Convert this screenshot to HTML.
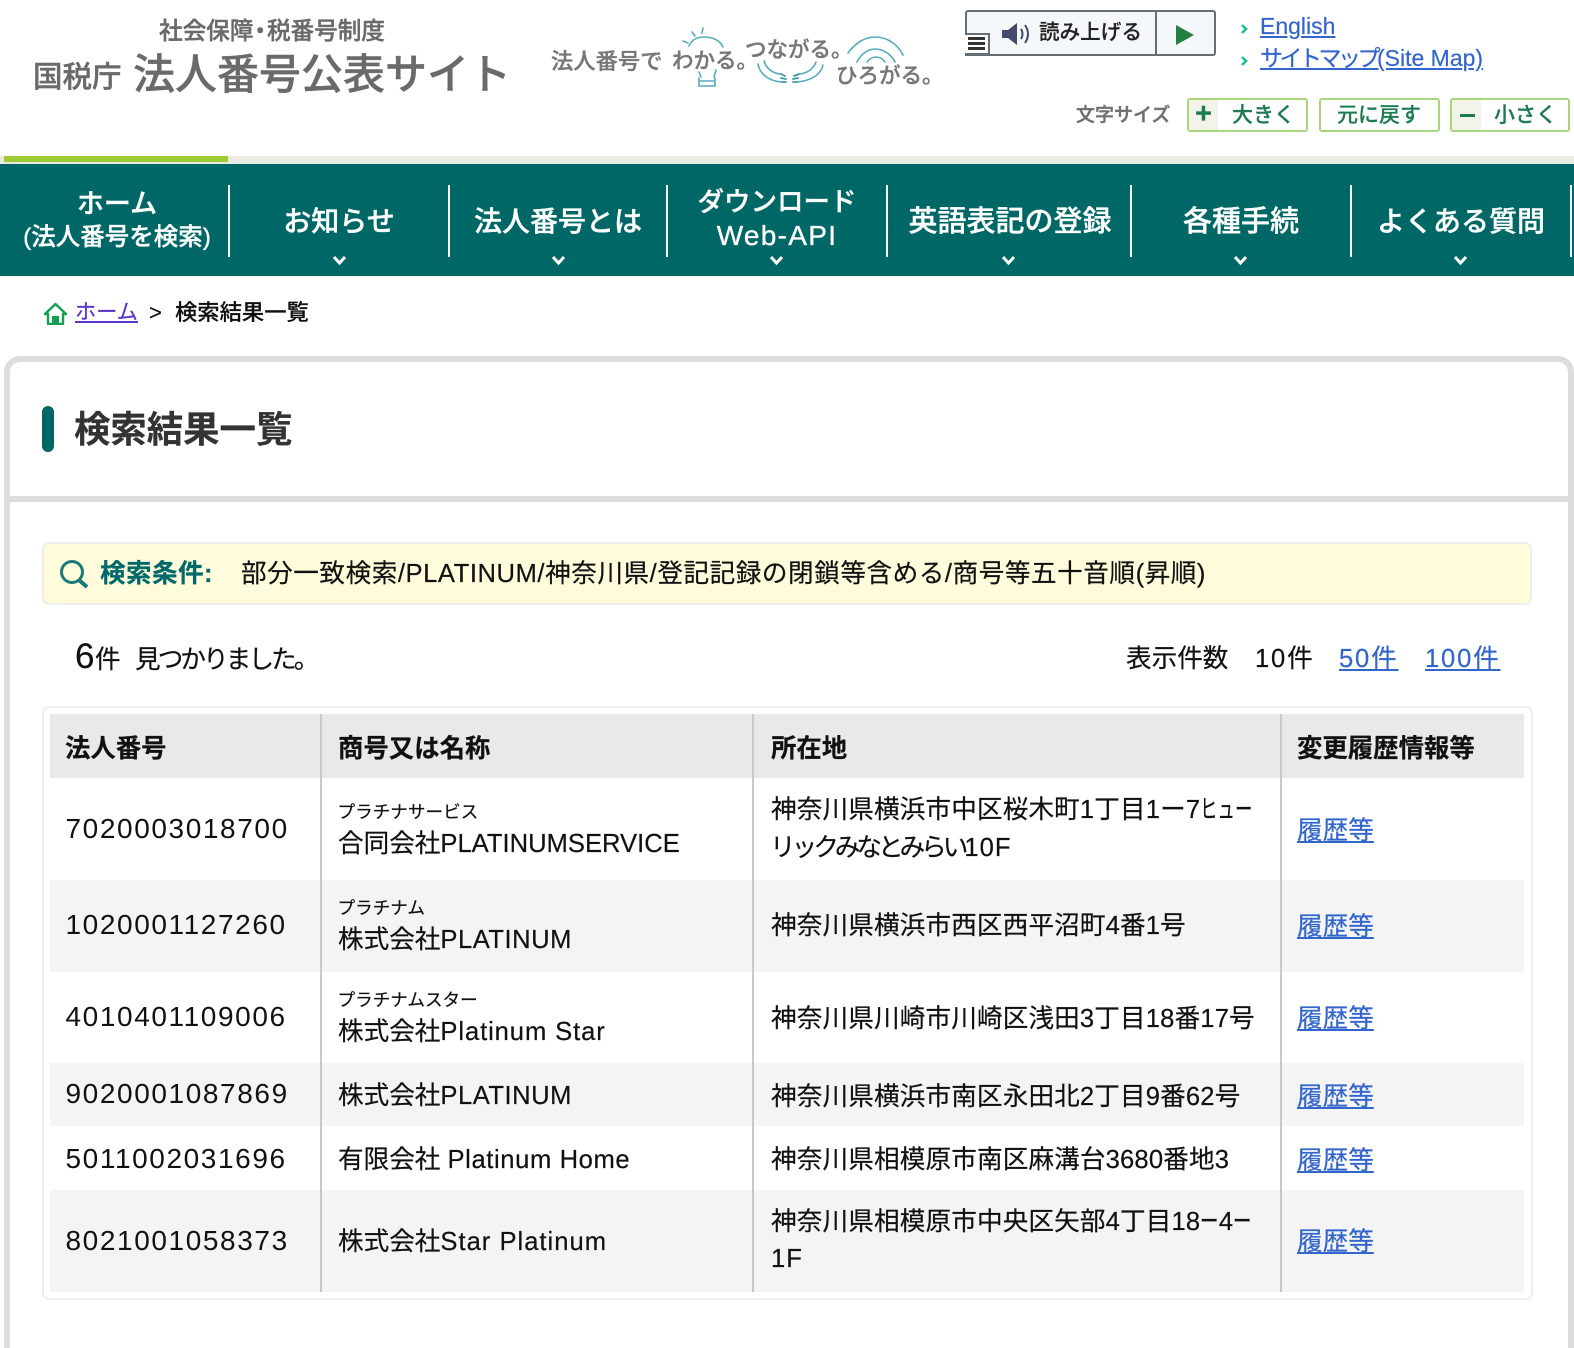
<!DOCTYPE html>
<html lang="ja"><head><meta charset="utf-8"><title>検索結果一覧</title>
<style>
html,body{margin:0;padding:0;background:#fff;width:1574px;height:1348px;overflow:hidden}
#p{position:relative;width:1574px;height:1348px;overflow:hidden;font-family:"Liberation Sans","Noto Sans CJK JP",sans-serif;color:#111}
.a{position:absolute;box-sizing:border-box}
.t{position:absolute;white-space:nowrap;line-height:30px;font-size:25.6px;margin-top:1px;-webkit-text-stroke:.2px}
.c{transform:translateX(-50%);text-align:center}
.n{color:#fff;font-size:28px;font-weight:500;-webkit-text-stroke:.35px}
a{color:#3366cc;text-decoration:underline}
.g{color:#6a6a6a;font-weight:500;-webkit-text-stroke:.4px}
.tg{color:#777;font-weight:500;-webkit-text-stroke:.35px}
.num{font-size:28px;letter-spacing:1.6px;-webkit-text-stroke:0}
.kana{font-size:17.6px}
.h{font-weight:700;font-size:25.4px}
.ad{letter-spacing:.15px}
.sq{display:inline-block;transform-origin:left center;line-height:30px;vertical-align:top}
.fs{color:#1e7a50;font-size:21px;font-weight:500}
.btn{position:absolute;top:98px;height:34px;border:2px solid #a9d67c;border-radius:3px;background:#fff;box-sizing:border-box}
.cell{position:absolute;left:0;top:0;width:29px;height:30px;background:#f3f3ea}
.sep{position:absolute;top:185px;width:2px;height:72px;background:#fff}
.rb{position:absolute;left:50px;width:1474px}
.vl{position:absolute;top:714px;height:578px;width:2px;background:#c9c9c9}
</style></head><body><div id="p">

<!-- logo -->
<div class="t g" style="left:159px;top:16px;font-size:23.7px;letter-spacing:-.1px;">社会保障<span style="margin:0 -5px">・</span>税番号制度</div>
<div class="t g" style="left:33px;top:62px;font-size:29.5px;">国税庁</div>
<div class="t g" style="left:133px;top:59px;font-size:42px;">法人番号公表サイト</div>

<!-- tagline -->
<div class="t tg" style="left:551px;top:46px;font-size:22.3px">法人番号で</div>
<div class="t tg" style="left:672px;top:45px;font-size:21.5px">わかる。</div>
<div class="t tg" style="left:745px;top:34px;font-size:21.5px">つながる。</div>
<div class="t tg" style="left:836px;top:60px;font-size:21.5px">ひろがる。</div>
<svg class="a" style="left:0;top:0" width="1000" height="100" fill="none" stroke="#55aabf" stroke-width="1.6" stroke-linecap="round">
<path d="M689 46C692 39 698 37 704 37C712 37 720 40 723 47"/>
<path d="M683 41L688 43M692 32L695 36M703 28L702 33"/>
<path d="M699 78V86H715V78M700 81H714"/>
<path d="M699 72L701 77M716 70L714 77"/>
<path d="M758 64C760 75 770 81 781 82M764 61C766 68 772 73 780 74"/>
<path d="M823 65C821 75 810 81 797 82M816 62C814 68 808 73 800 74"/>
<path d="M781 74L785 76M781 78L786 79M782 82L786 82M799 74L794 76M798 78L793 79M797 82L793 82" stroke-width="1.8" stroke="#3c96ad"/>
<path d="M848 53C856 42 866 37 875 37C886 37 897 43 903 55"/>
<path d="M857 62C861 54 868 49 875 49C883 49 891 54 895 62"/>
<path d="M867 62C870 58 873 57 876 57C880 57 883 59 885 62"/>
</svg>

<!-- read aloud -->
<div class="a" style="left:965px;top:10px;width:251px;height:46px;border:2px solid #656d75;border-radius:3px;background:#f5f8fb"></div>
<div class="a" style="left:1155px;top:11px;width:2px;height:44px;background:#656d75"></div>
<div class="a" style="left:965px;top:33px;width:25px;height:23px;background:#fff;border-top:2px solid #656d75;border-right:2px solid #656d75;border-bottom:3px solid #656d75"></div>
<div class="a" style="left:968px;top:37px;width:17px;height:3px;background:#333"></div>
<div class="a" style="left:968px;top:42px;width:17px;height:3px;background:#333"></div>
<div class="a" style="left:968px;top:47px;width:17px;height:3px;background:#333"></div>
<svg class="a" style="left:1000px;top:20px" width="34" height="28" fill="none">
<path d="M2 10H8L17 3V25L8 18H2Z" fill="#444a6e"/>
<path d="M21 9C23 12 23 16 21 19M25 5C29 11 29 17 25 23" stroke="#444a6e" stroke-width="2"/>
</svg>
<div class="t" style="left:1039px;top:17px;font-size:20.6px;font-weight:500;color:#222">読み上げる</div>
<svg class="a" style="left:1176px;top:25px" width="18" height="20"><path d="M0 0L18 10L0 20Z" fill="#23803f"/></svg>

<!-- links -->
<svg class="a" style="left:1238px;top:20px" width="14" height="52" fill="none" stroke="#1cc09a" stroke-width="2.6"><path d="M4 5L8 9L4 13M4 37L8 41L4 45"/></svg>
<div class="t" style="left:1260px;top:10px;font-size:23px"><a href="#">English</a></div>
<div class="t" style="left:1260px;top:42px;font-size:23px"><a href="#"><span style="letter-spacing:-3.5px">サイトマップ</span>(Site Map)</a></div>

<!-- font size -->
<div class="t g" style="left:1076px;top:100px;font-size:19px;color:#707070">文字サイズ</div>
<div class="btn" style="left:1187px;width:121px"><div class="cell"></div>
<div class="t" style="left:6px;top:-2px;font-size:29px;font-weight:700;color:#1e7a50">+</div>
<div class="t fs" style="left:43px;top:0">大きく</div></div>
<div class="btn" style="left:1319px;width:121px"><div class="t fs" style="left:16px;top:0">元に戻す</div></div>
<div class="btn" style="left:1450px;width:120px"><div class="cell"></div>
<div class="a" style="left:8px;top:14px;width:15px;height:3px;background:#1e7a50"></div>
<div class="t fs" style="left:42px;top:0">小さく</div></div>

<!-- nav -->
<div class="a" style="left:0;top:156px;width:1574px;height:8px;background:#ebebe3"></div>
<div class="a" style="left:4px;top:156px;width:224px;height:6px;background:#9ccc32"></div>
<div class="a" style="left:0;top:164px;width:1574px;height:112px;background:#006767"></div>
<div class="sep" style="left:228px"></div><div class="sep" style="left:448px"></div><div class="sep" style="left:666px"></div><div class="sep" style="left:886px"></div><div class="sep" style="left:1130px"></div><div class="sep" style="left:1350px"></div><div class="sep" style="left:1570px"></div>
<div class="t n c" style="left:117px;top:188px;font-size:27px">ホーム</div>
<div class="t n c" style="left:117px;top:222px;font-size:24.5px">(法人番号を検索)</div>
<div class="t n c" style="left:339px;top:206px">お知らせ</div>
<div class="t n c" style="left:558px;top:206px">法人番号とは</div>
<div class="t n c" style="left:777px;top:186px;font-size:26.5px">ダウンロード</div>
<div class="t n c" style="left:777px;top:220px;letter-spacing:1.3px">Web-API</div>
<div class="t n c" style="left:1010px;top:206px;font-size:29px">英語表記の登録</div>
<div class="t n c" style="left:1241px;top:206px;font-size:29px">各種手続</div>
<div class="t n c" style="left:1461px;top:206px">よくある質問</div>
<svg class="a" style="left:0;top:254px" width="1574" height="14" fill="none" stroke="#fff" stroke-width="3">
<path d="M334 3L339.500 9L345 3M553 3L558.500 9L564 3M771 3L776.500 9L782 3M1003 3L1008.500 9L1014 3M1235 3L1240.500 9L1246 3M1455 3L1460.500 9L1466 3"/>
</svg>

<!-- breadcrumb -->
<svg class="a" style="left:44px;top:302px" width="23" height="23"><path d="M11.500 2L22 12H19V22H4V12H1Z" fill="none" stroke="#12a050" stroke-width="2.400" stroke-linejoin="round"/><rect x="8" y="14" width="7" height="8" fill="#12a050"/></svg>
<div class="t" style="left:75px;top:297px;font-size:21.200px"><a href="#" style="color:#5b36c8">ホーム</a></div>
<div class="t" style="left:149px;top:297px;font-size:22px;color:#111">&gt;</div>
<div class="t" style="left:175px;top:297px;font-size:22.300px;font-weight:500;color:#111">検索結果一覧</div>

<!-- card -->
<div class="a" style="left:4px;top:356px;width:1570px;height:992px;border:6px solid #ddd;border-bottom:0;border-radius:16px 16px 0 0;background:#fff"></div>
<div class="a" style="left:10px;top:496px;width:1558px;height:6px;background:#ddd"></div>
<div class="a" style="left:42px;top:406px;width:12px;height:46px;background:#006767;border-radius:6px"></div>
<div class="t" style="left:74px;top:414px;font-size:36.400px;font-weight:700;color:#333">検索結果一覧</div>

<!-- condition -->
<div class="a" style="left:42px;top:542px;width:1490px;height:63px;background:#fffbdb;border:2px solid #eee;border-radius:7px"></div>
<svg class="a" style="left:59px;top:559px" width="30" height="30" fill="none" stroke="#1a7a78"><circle cx="13" cy="13" r="10.500" stroke-width="3"/><path d="M20 21L28 28" stroke-width="4"/></svg>
<div class="t" style="left:100px;top:558px;font-weight:700;color:#00696a;letter-spacing:.4px">検索条件:</div>
<div class="t" style="left:241px;top:558px;letter-spacing:.55px">部分一致検索/PLATINUM/神奈川県/登記記録の閉鎖等含める/商号等五十音順(昇順)</div>

<!-- count -->
<div class="t" style="left:75px;top:641px;font-size:35px;font-weight:500">6</div>
<div class="t" style="left:95px;top:644px;font-size:25.600px">件</div>
<div class="t" style="left:135px;top:644px;font-size:25.600px;letter-spacing:-2.900px">見つかりました。</div>
<div class="t" style="left:1126px;top:643px">表示件数</div>
<div class="t" style="left:1255px;top:643px;letter-spacing:1.800px">10件</div>
<div class="t" style="left:1339px;top:643px;letter-spacing:1.800px"><a href="#">50件</a></div>
<div class="t" style="left:1425px;top:643px;letter-spacing:1.800px"><a href="#">100件</a></div>

<!-- table -->
<div class="a" style="left:42px;top:706px;width:1491px;height:594px;border:2.500px solid #eee;border-radius:7px;background:#fff"></div>
<div class="rb" style="top:714px;height:64px;background:#e9e9e9"></div>
<div class="rb" style="top:880px;height:92px;background:#f4f4f4"></div>
<div class="rb" style="top:1063px;height:63px;background:#f4f4f4"></div>
<div class="rb" style="top:1190px;height:102px;background:#f4f4f4"></div>
<div class="vl" style="left:320px"></div><div class="vl" style="left:752px"></div><div class="vl" style="left:1280px"></div>

<div class="t h" style="left:65px;top:733px">法人番号</div>
<div class="t h" style="left:338px;top:733px">商号又は名称</div>
<div class="t h" style="left:771px;top:733px">所在地</div>
<div class="t h" style="left:1297px;top:733px">変更履歴情報等</div>

<div class="t num" style="left:65.500px;top:813px">7020003018700</div>
<div class="t kana" style="left:337.500px;top:796px">プラチナサービス</div>
<div class="t" style="left:338px;top:828px">合同会社PLATINUMSERVICE</div>
<div class="t ad" style="left:771px;top:794px">神奈川県横浜市中区桜木町1丁目1ー7<span class="sq" style="width:52px;transform:scaleX(.68)">ヒュー</span></div>
<div class="t" style="left:770px;top:832px"><span style="letter-spacing:-4px">リックみなとみらい</span><span style="letter-spacing:1px">10F</span></div>
<div class="t" style="left:1297px;top:815px"><a href="#">履歴等</a></div>

<div class="t num" style="left:65.500px;top:909px">1020001127260</div>
<div class="t kana" style="left:337.500px;top:892px">プラチナム</div>
<div class="t" style="left:338px;top:924px">株式会社<span style="letter-spacing:.5px">PLATINUM</span></div>
<div class="t ad" style="left:771px;top:910px">神奈川県横浜市西区西平沼町4番1号</div>
<div class="t" style="left:1297px;top:911px"><a href="#">履歴等</a></div>

<div class="t num" style="left:65.500px;top:1001px">4010401109006</div>
<div class="t kana" style="left:337.500px;top:984px">プラチナムスター</div>
<div class="t" style="left:338px;top:1016px">株式会社<span style="letter-spacing:.9px">Platinum Star</span></div>
<div class="t ad" style="left:771px;top:1003px">神奈川県川崎市川崎区浅田3丁目18番17号</div>
<div class="t" style="left:1297px;top:1003px"><a href="#">履歴等</a></div>

<div class="t num" style="left:65.500px;top:1078px">9020001087869</div>
<div class="t" style="left:338px;top:1080px">株式会社<span style="letter-spacing:.5px">PLATINUM</span></div>
<div class="t ad" style="left:771px;top:1081px">神奈川県横浜市南区永田北2丁目9番62号</div>
<div class="t" style="left:1297px;top:1081px"><a href="#">履歴等</a></div>

<div class="t num" style="left:65.500px;top:1143px">5011002031696</div>
<div class="t" style="left:338px;top:1144px">有限会社 <span style="letter-spacing:.6px">Platinum Home</span></div>
<div class="t ad" style="left:771px;top:1144px">神奈川県相模原市南区麻溝台3680番地3</div>
<div class="t" style="left:1297px;top:1145px"><a href="#">履歴等</a></div>

<div class="t num" style="left:65.500px;top:1225px">8021001058373</div>
<div class="t" style="left:338px;top:1226px">株式会社<span style="letter-spacing:1px">Star Platinum</span></div>
<div class="t ad" style="left:771px;top:1206px">神奈川県相模原市中央区矢部4丁目18<span class="sq" style="width:18.500px;transform:scaleX(.72)">ー</span>4<span class="sq" style="width:18.500px;transform:scaleX(.72)">ー</span></div>
<div class="t" style="left:771px;top:1243px;letter-spacing:1px">1F</div>
<div class="t" style="left:1297px;top:1226px"><a href="#">履歴等</a></div>

</div></body></html>
